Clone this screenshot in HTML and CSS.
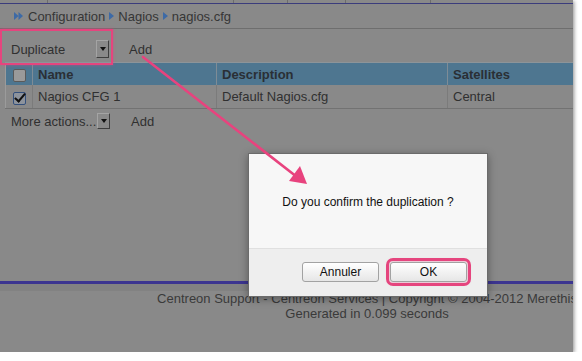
FILE: index.html
```html
<!doctype html>
<html lang="en">
  <head>
    <meta charset="UTF-8" />
    <title>Nagios configuration - duplicate</title>
    <link rel="stylesheet" href="styles.css">
  </head>
  <body>
    <div class="shot">
      <div class="page">
        <div class="topnav">
          <span class="tab tab-1"></span>
          <span class="tab tab-2"></span>
          <span class="tab tab-3"></span>
          <span class="tab tab-4"></span>
          <span class="tab tab-5"></span>
        </div>

        <div class="crumbs">
          <svg class="crumb-icon" width="9" height="8" viewBox="0 0 9 8">
            <path d="M0 0 L4.5 4 L0 8 Z M4.5 0 L9 4 L4.5 8 Z" fill="#3d6aa6" />
          </svg>
          <span>Configuration</span>
          <span class="tri"></span>
          <span>Nagios</span>
          <span class="tri"></span>
          <span>nagios.cfg</span>
        </div>

        <div class="toolbar">
          <div class="select">
            <span>Duplicate</span>
            <span class="select-btn"></span>
          </div>
          <span class="link">Add</span>
        </div>

        <table class="list">
          <colgroup>
            <col class="w-check" />
            <col class="w-name" />
            <col class="w-desc" />
            <col />
          </colgroup>
          <thead>
            <tr>
              <th class="col-check"><span class="check"></span></th>
              <th>Name</th>
              <th>Description</th>
              <th>Satellites</th>
            </tr>
          </thead>
          <tbody>
            <tr>
              <td class="col-check"><span class="check checked"></span></td>
              <td>Nagios CFG 1</td>
              <td>Default Nagios.cfg</td>
              <td>Central</td>
            </tr>
          </tbody>
        </table>

        <div class="toolbar toolbar-bottom">
          <div class="select select-small">
            <span>More actions...</span>
            <span class="select-btn"></span>
          </div>
          <span class="link">Add</span>
        </div>

        <div class="footer">
          <div class="footer-line"></div>
          <div class="footer-band"></div>
          <p>Centreon Support - Centreon Services | Copyright &copy; 2004-2012 Merethis</p>
          <p>Generated in 0.099 seconds</p>
        </div>
      </div>

      <!-- annotations -->
      <div class="mark mark-select"></div>
      <svg class="arrow" width="582" height="361" viewBox="0 0 582 361">
        <line x1="143" y1="57" x2="297" y2="177" stroke="#e8437e" stroke-width="2.6" stroke-linecap="round" />
        <polygon points="307,184 289,181 300,166" fill="#e8437e" />
      </svg>

      <div class="dialog">
        <div class="dialog-body">Do you confirm the duplication ?</div>
        <div class="dialog-buttons">
          <button class="btn">Annuler</button>
          <button class="btn btn-ok">OK</button>
        </div>
      </div>
    </div>
  </body>
</html>
```

FILE: styles.css
```css
body {
  margin: 0;
  background: #fff;
  font-family: "Liberation Sans", Arial, sans-serif;
}

.shot {
  position: relative;
  width: 573px;
  height: 352px;
  overflow: hidden;
  background: #898989;
  box-shadow: 1px 1px 4px rgba(0, 0, 0, 0.45);
}

.page {
  width: 734px;
  height: 352px;
  display: flex;
  flex-direction: column;
  color: #333;
}

/* top menu remains */
.topnav {
  display: flex;
  height: 3px;
  border-bottom: 1px solid #3b3c7c;
}

.tab {
  height: 3px;
  border-right: 1px solid #6c6c6c;
}

.tab-1 { width: 47px; }
.tab-2 { width: 185px; }
.tab-3 { width: 53px; }
.tab-4 { width: 57px; }
.tab-5 { width: 84px; }

.crumbs {
  display: flex;
  align-items: center;
  height: 24px;
  padding-left: 14px;
  font-size: 13px;
  color: #363636;
  border-bottom: 1px solid #6e6e6e;
}

.crumb-icon {
  margin-right: 5px;
}

.tri {
  width: 0;
  height: 0;
  margin: 0 4px;
  border-top: 4px solid transparent;
  border-bottom: 4px solid transparent;
  border-left: 5px solid #3d6aa6;
}

.toolbar {
  display: flex;
  align-items: center;
  height: 18px;
  padding: 11px 0 4px 11px;
  font-size: 13px;
  color: #303030;
}

.select {
  display: flex;
  align-items: center;
  width: 98px;
  height: 18px;
}

.select-small {
  width: 99px;
  height: 16px;
}

.select-btn {
  margin-left: auto;
  width: 11px;
  height: 16px;
  border-top: 1px solid #a4a4a4;
  border-left: 1px solid #a4a4a4;
  border-right: 1px solid #3e3e3e;
  border-bottom: 1px solid #3e3e3e;
  position: relative;
}

.select-btn::after {
  content: "";
  position: absolute;
  left: 3px;
  top: 6px;
  border-left: 3px solid transparent;
  border-right: 3px solid transparent;
  border-top: 4px solid #111;
}

.select-small .select-btn {
  height: 14px;
}

.select-small .select-btn::after {
  top: 5px;
}

.link {
  margin-left: 20px;
}

.toolbar-bottom {
  height: 16px;
  padding: 4px 0 0 11px;
}

.toolbar-bottom .link {
  margin-left: 21px;
}

.list {
  margin-left: 5px;
  width: 660px;
  table-layout: fixed;
  border-collapse: collapse;
  font-size: 13px;
  color: #303030;
}

.w-check { width: 27px; }
.w-name { width: 184px; }
.w-desc { width: 231px; }

.list th {
  height: 22px;
  padding: 0 0 0 5px;
  text-align: left;
  font-weight: bold;
  background: #4e7690;
  border-top: 1px solid #8d9499;
  border-left: 1px solid #7e8c96;
  color: #2a2f35;
}

.list td {
  height: 23px;
  padding: 0 0 0 5px;
  border-left: 1px solid #7b7b7b;
  border-bottom: 1px solid #727272;
}

.list .col-check {
  padding: 0;
  text-align: center;
  border-left: 1px solid #9b9b9b;
}

.check {
  display: inline-block;
  width: 11px;
  height: 11px;
  margin-top: 3px;
  border: 1px solid #5a5a5a;
  border-radius: 2px;
  background: #9a9a9a;
  vertical-align: middle;
  position: relative;
}

.check.checked {
  border-color: #34507c;
  background: #8d939c;
}

.check.checked::after {
  content: "";
  position: absolute;
  left: 3px;
  top: -2px;
  width: 4px;
  height: 9px;
  border-right: 2px solid #111;
  border-bottom: 2px solid #111;
  transform: rotate(40deg);
}

.footer {
  margin-top: auto;
  padding-bottom: 31px;
  text-align: center;
  font-size: 13px;
  color: #3a3a3a;
}

.footer-line {
  height: 3px;
  background: #3c3590;
}

.footer-band {
  height: 7px;
  background: #828282;
}

.footer p {
  margin: 0;
  line-height: 15px;
}

/* annotations drawn over the screenshot */
.mark {
  position: absolute;
  border: 2px solid #e5457e;
  box-shadow: 0 0 3px rgba(229, 69, 126, 0.6);
}

.mark-select {
  left: 0;
  top: 29px;
  width: 109px;
  height: 32px;
}

.arrow {
  position: absolute;
  left: 0;
  top: 0;
  z-index: 2;
}

.dialog {
  position: absolute;
  left: 248px;
  top: 153px;
  width: 238px;
  height: 142px;
  background: #f7f7f7;
  border: 1px solid #6b6b6b;
  box-shadow: 0 2px 8px rgba(0, 0, 0, 0.35);
  display: flex;
  flex-direction: column;
  z-index: 1;
}

.dialog-body {
  flex: 1;
  display: flex;
  align-items: center;
  justify-content: center;
  padding-top: 1px;
  font-size: 12px;
  color: #111;
}

.dialog-buttons {
  height: 48px;
  display: flex;
  justify-content: flex-end;
  align-items: flex-start;
  gap: 11px;
  padding: 13px 20px 0 0;
  box-sizing: border-box;
  background: #eeeeee;
  border-top: 1px solid #e0e0e0;
}

.btn {
  width: 77px;
  height: 20px;
  padding: 0;
  font-family: "Liberation Sans", Arial, sans-serif;
  font-size: 12px;
  color: #111;
  background: linear-gradient(#ffffff, #e6e6e6);
  border: 1px solid #a2a2a2;
  border-radius: 3px;
}

.btn-ok {
  outline: 3px solid #e5457e;
  outline-offset: 1px;
  box-shadow: 0 0 4px rgba(229, 69, 126, 0.5);
}
```
